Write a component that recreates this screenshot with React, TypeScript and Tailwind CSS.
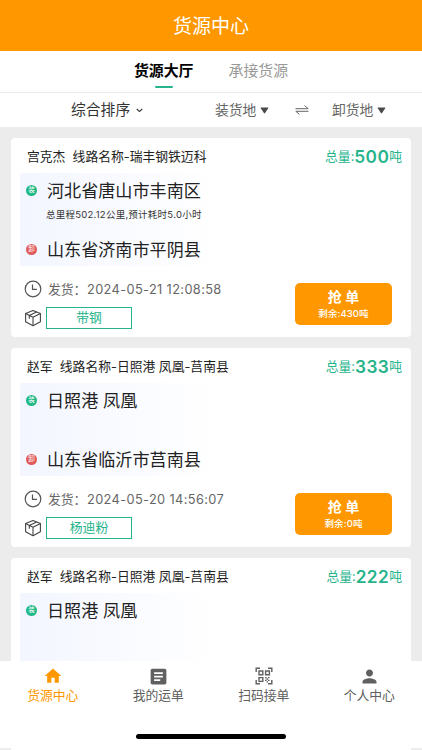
import { MdHome, MdArticle, MdPerson } from 'react-icons/md';

interface Cargo {
    id: number;
    owner: string;
    route: string;
    total: number;
    from: string;
    distance?: string;
    to: string;
    sendTime: string;
    goods: string;
    rest: number;
}

const cargos: Cargo[] = [
    {
        id: 1,
        owner: '宫克杰',
        route: '瑞丰钢铁迈科',
        total: 500,
        from: '河北省唐山市丰南区',
        distance: '总里程502.12公里,预计耗时5.0小时',
        to: '山东省济南市平阴县',
        sendTime: '2024-05-21 12:08:58',
        goods: '带钢',
        rest: 430,
    },
    {
        id: 2,
        owner: '赵军',
        route: '日照港 凤凰-莒南县',
        total: 333,
        from: '日照港 凤凰',
        to: '山东省临沂市莒南县',
        sendTime: '2024-05-20 14:56:07',
        goods: '杨迪粉',
        rest: 0,
    },
];

const nextCargo = {
    owner: '赵军',
    route: '日照港 凤凰-莒南县',
    total: 222,
    from: '日照港 凤凰',
};

const ClockIcon = () => (
    <svg className="w-[18px] h-[18px] shrink-0" viewBox="0 0 18 18" fill="none" stroke="#555" strokeWidth="1.2">
        <circle cx="9" cy="9" r="7.8" />
        <path d="M8.5 4.6v4.7h4.4" />
    </svg>
);

const BoxIcon = () => (
    <svg className="w-[18px] h-[18px] shrink-0" viewBox="0 0 18 18" fill="none" stroke="#444" strokeWidth="1.1" strokeLinejoin="round">
        <path d="M9 1.4l7.4 3.2v8.2L9 16.8l-7.4-4V4.6z" />
        <path d="M1.6 4.6L9 8.3l7.4-3.7M9 8.3v8.5M12.6 3L5.3 6.5v3.3" />
    </svg>
);

const QrIcon = () => (
    <svg className="w-[18px] h-[18px]" viewBox="0 0 18 18" fill="none" stroke="#606060" strokeWidth="1.4">
        <path d="M1.2 5V1.2H5M13 1.2h3.8V5M16.8 13v3.8H13M5 16.8H1.2V13" />
        <path d="M4 4h3.8v3.8H4zM10.6 4h3.8v3.8h-3.8zM4 10.6h3.8v3.8H4z" />
        <path d="M10 10.6h1.5M13 10.6h1.5M11.5 12h1.5M10 13.4h1.5M13 13.4h1.5M11.5 14.8h1.5" strokeWidth="1.3" />
    </svg>
);

const Caret = () => (
    <svg className="w-[9px] h-[7px] ml-1" viewBox="0 0 8 7" fill="#4a4a4a">
        <path d="M.7.5h6.6q.9 0 .4.8L4.6 6q-.6.8-1.2 0L.3 1.3Q-.2.5.7.5z" />
    </svg>
);

const CardHead = ({ owner, route, total }: { owner: string; route: string; total: number }) => (
    <div className="flex h-[20px] items-center justify-between pl-[7px] pr-[9px]">
        <div className="text-[12.8px] text-[#222] whitespace-pre">
            {owner}  线路名称-{route}
        </div>
        <div className="flex items-center text-[12.8px] text-[#25b48b]">
            总量:<span className="text-[17.3px] font-semibold tracking-[0.4px]">{total}</span>吨
        </div>
    </div>
);

const Place = ({ name, type }: { name: string; type: '装' | '卸' }) => (
    <div className="flex h-[34px] items-center">
        <span className={`flex w-[11px] h-[11px] items-center justify-center rounded-full text-[6.5px] leading-none text-white ${type === '装' ? 'bg-[#1fb887]' : 'bg-[#e05a5a]'}`}>
            {type}
        </span>
        <span className="ml-[10px] pt-[2px] text-[17.1px] text-[#222] whitespace-nowrap">{name}</span>
    </div>
);

const CargoCard = ({ cargo }: { cargo: Cargo }) => {
    return (
        <div className="h-[199px] shrink-0 rounded-[4px] bg-white pt-[9px] pl-[9px]">
            <CardHead owner={cargo.owner} route={cargo.route} total={cargo.total} />

            <div className="mt-[6px] h-[93px] w-[195px] rounded-[2px] bg-linear-to-r from-[#f3f6ff] to-white pl-[6px]">
                <Place name={cargo.from} type="装" />
                <div className="h-[25px] pl-[20px] text-[9.5px] leading-[16px] tracking-[0.25px] text-[#333] whitespace-nowrap">{cargo.distance}</div>
                <Place name={cargo.to} type="卸" />
            </div>

            <div className="flex justify-between pl-1 pr-[19px] pt-[14px]">
                <div>
                    <div className="flex h-[18px] items-center text-[#666]">
                        <ClockIcon />
                        <span className="ml-[6px] w-[39px] pt-[2px] text-[12.8px] whitespace-nowrap">发货：</span>
                        <span className="pt-[2px] text-[12.8px] tracking-[0.37px] whitespace-nowrap">{cargo.sendTime}</span>
                    </div>
                    <div className="mt-[9px] flex h-[22px] items-center">
                        <BoxIcon />
                        <span className="ml-1 flex h-[22px] w-[86px] items-center justify-center border border-[#25b48b] text-[12.8px] text-[#25b48b]">
                            {cargo.goods}
                        </span>
                    </div>
                </div>
                <button className="mt-[3px] flex h-[42px] w-[97px] flex-col items-center rounded-[5px] bg-[#ff9800] pt-[4px] text-white">
                    <span className="text-[14px] leading-[19px] font-bold">抢 单</span>
                    <span className="text-[9.5px] leading-[15px] font-medium tracking-[0.1px]">剩余:{cargo.rest}吨</span>
                </button>
            </div>
        </div>
    );
};

const tabs = [
    { name: '货源中心', icon: <MdHome className="w-5 h-5" />, active: true },
    { name: '我的运单', icon: <MdArticle className="w-[21px] h-[21px]" />, active: false },
    { name: '扫码接单', icon: <QrIcon />, active: false },
    { name: '个人中心', icon: <MdPerson className="w-[21px] h-[21px]" />, active: false },
];

export default function App() {
    return (
        <div className="flex h-[750px] w-[422px] flex-col overflow-hidden bg-[#ececec] font-['Inter','Noto_Sans_CJK_SC',sans-serif]">
            <header className="flex h-[51px] shrink-0 items-center justify-center bg-[#ff9800] pt-[3px] text-[19px] text-white">货源中心</header>

            <nav className="flex h-[42px] shrink-0 justify-center gap-[35px] border-b border-[#e9e9e9] bg-white pt-[9px] text-[14.9px]">
                <div className="flex flex-col items-center font-bold text-black">
                    <span className="leading-[22px]">货源大厅</span>
                    <span className="mt-[4px] h-[2px] w-[18px] rounded-full bg-[#25b48b]"></span>
                </div>
                <div className="leading-[22px] text-[#999]">承接货源</div>
            </nav>

            <div className="flex h-[34px] shrink-0 items-center bg-white text-[#666]">
                <div className="ml-[71px] flex w-[144px] items-center text-[14.8px] text-[#333]">
                    综合排序
                    <svg className="ml-[6px] w-[7px] h-[5px]" viewBox="0 0 7 5" fill="none" stroke="#333" strokeWidth="1.1">
                        <path d="M.8 1l2.7 2.6L6.2 1" />
                    </svg>
                </div>
                <div className="flex w-[80px] items-center text-[13.8px]">装货地<Caret /></div>
                <svg className="w-[14px] h-[10px]" viewBox="0 0 14 10" fill="none" stroke="#666" strokeWidth="1">
                    <path d="M.5 3.7h12.7L9.6.6M13.5 6.3H.8l3.6 3.1" />
                </svg>
                <div className="ml-[23px] flex items-center text-[13.8px]">卸货地<Caret /></div>
            </div>

            <main className="flex min-h-0 flex-1 flex-col gap-[11px] px-[11px] pt-[11px]">
                {cargos.map((cargo) => (
                    <CargoCard key={cargo.id} cargo={cargo} />
                ))}
                <div className="flex-1 rounded-t-[4px] bg-white pt-[9px] pl-[9px]">
                    <CardHead owner={nextCargo.owner} route={nextCargo.route} total={nextCargo.total} />
                    <div className="mt-[6px] h-[68px] w-[195px] rounded-t-[2px] bg-linear-to-r from-[#f3f6ff] to-white pl-[6px]">
                        <Place name={nextCargo.from} type="装" />
                    </div>
                </div>
            </main>

            <footer className="h-[87px] shrink-0 bg-white">
                <div className="flex pt-[5px]">
                    {tabs.map((tab) => (
                        <div key={tab.name} className={`flex flex-1 flex-col items-center ${tab.active ? 'text-[#ff9800]' : 'text-[#606060]'}`}>
                            <div className="flex h-5 items-center">{tab.icon}</div>
                            <span className="text-[12.8px] leading-[19px]">{tab.name}</span>
                        </div>
                    ))}
                </div>
                <div className="mx-auto mt-[29px] h-[5px] w-[150px] rounded-full bg-black"></div>
            </footer>
            <div className="h-[2px] shrink-0 px-[11px]">
                <div className="h-full bg-white"></div>
            </div>
        </div>
    );
}
